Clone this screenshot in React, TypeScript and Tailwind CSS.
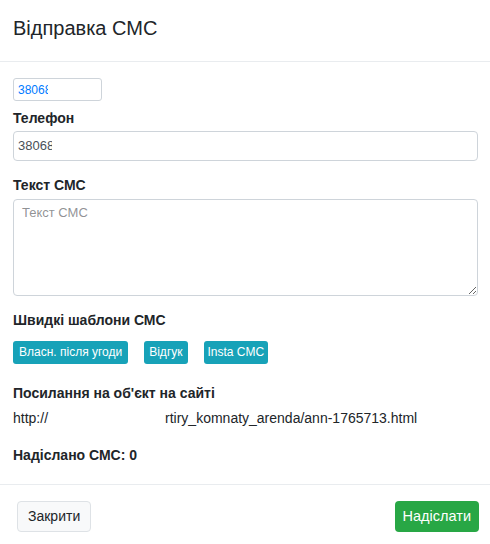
import React from "react";

export default function App() {
  const font = { fontFamily: '"Liberation Sans", Arial, sans-serif' };
  return (
    <div className="w-[490px] h-[544px] bg-white text-[#212529]" style={font}>
      <div className="h-[62px] border-b border-[#e9ecef] flex items-center pl-[13px]">
        <h5 className="text-[20px] leading-[30px] font-normal -mt-[5px]">Відправка СМС</h5>
      </div>
      <div className="pt-[16px] pl-[13px] pr-[12px] pb-[18px]">
        <div className="w-[89px] h-[23px] border border-[#ced4da] rounded-[3px] flex items-center pl-[4px]">
          <span className="block w-[30px] overflow-hidden whitespace-nowrap text-[12px] text-[#007bff]">38068</span>
        </div>
        <div className="mt-[7px] text-[14px] leading-[21px] font-bold">Телефон</div>
        <div className="mt-[2px] h-[30px] border border-[#ced4da] rounded-[4px] flex items-center pl-[4px]">
          <span className="block w-[34px] overflow-hidden whitespace-nowrap text-[13px] text-[#495057]">38068</span>
        </div>
        <div className="mt-[14px] text-[14px] leading-[21px] font-bold">Текст СМС</div>
        <textarea
          className="mt-[3px] block w-full h-[97px] border border-[#ced4da] rounded-[4px] px-[8px] py-[3px] text-[13px] outline-none"
          placeholder="Текст СМС"
          style={font}
        />
        <div className="mt-[14px] text-[14px] leading-[21px] font-bold">Швидкі шаблони СМС</div>
        <div className="mt-[10px] flex gap-[16px]">
          <button className="h-[23px] px-[6px] rounded-[3px] bg-[#17a2b8] text-white text-[12px] leading-[23px]" style={font}>Власн. після угоди</button>
          <button className="h-[23px] px-[5px] rounded-[3px] bg-[#17a2b8] text-white text-[12px] leading-[23px]" style={font}>Відгук</button>
          <button className="h-[23px] px-[4px] rounded-[3px] bg-[#17a2b8] text-white text-[12px] leading-[23px]" style={font}>Insta СМС</button>
        </div>
        <div className="mt-[19px] text-[14px] leading-[21px] font-bold">Посилання на об'єкт на сайті</div>
        <div className="mt-[4px] text-[14px] leading-[21px] flex whitespace-nowrap">
          <span>http://</span>
          <span className="w-[117px]" />
          <span>rtiry_komnaty_arenda/ann-1765713.html</span>
        </div>
        <div className="mt-[16px] text-[14px] leading-[21px] font-bold">Надіслано СМС: 0</div>
      </div>
      <div className="border-t border-[#e9ecef] flex items-start justify-between pt-[16px] pl-[17px] pr-[11px]">
        <button className="h-[31px] px-[10px] rounded-[4px] bg-[#f8f9fa] border border-[#dee2e6] text-[14px] text-[#212529]" style={font}>Закрити</button>
        <button className="h-[31px] px-[8px] rounded-[4px] bg-[#28a745] text-white text-[14.5px]" style={font}>Надіслати</button>
      </div>
    </div>
  );
}
